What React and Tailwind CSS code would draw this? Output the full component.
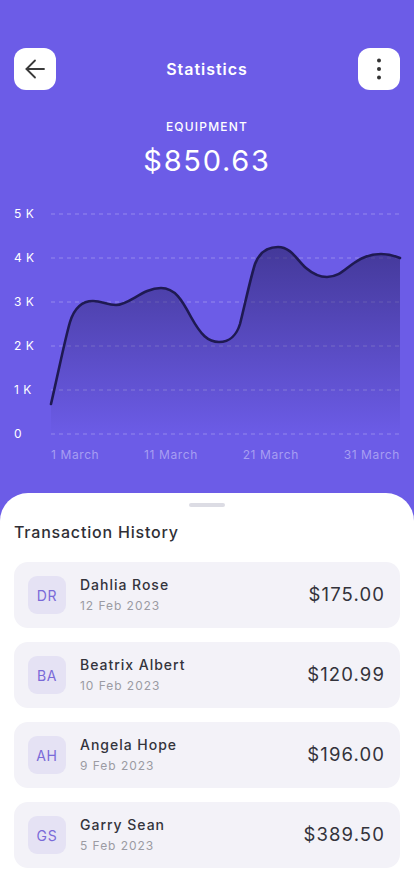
import React from "react";

const txs = [
  { i: "DR", name: "Dahlia Rose", date: "12 Feb 2023", amt: "$175.00" },
  { i: "BA", name: "Beatrix Albert", date: "10 Feb 2023", amt: "$120.99" },
  { i: "AH", name: "Angela Hope", date: "9 Feb 2023", amt: "$196.00" },
  { i: "GS", name: "Garry Sean", date: "5 Feb 2023", amt: "$389.50" },
];

const curve =
  "M0,200 C7,170 14,135 19,118 C24,102 32,97 42,97 C51,97 56,101 65,101 C78,101 92,84 110,84 C124,84 131,96 140,113 C150,131 157,138 168,138 C179,138 186,130 189,120 C194,100 200,72 204,60 C209,47 217,43 227,43 C240,43 246,56 255,64 C262,70 268,73 276,73 C288,73 294,65 303,59 C313,52 321,50 330,50 C339,50 344,52 349,54";

export default function App() {
  const ys = ["5 K", "4 K", "3 K", "2 K", "1 K", "0"];
  return (
    <div
      className="min-h-[896px] w-[414px] flex flex-col bg-[#6c5ce7]"
      style={{ fontFamily: "Inter, 'Noto Sans', sans-serif" }}
    >
      <div className="pt-[48px] px-[14px] flex items-center justify-between">
        <button className="w-[42px] h-[42px] rounded-[12px] bg-white flex items-center justify-center">
          <svg width="42" height="42" viewBox="0 0 42 42" fill="none" stroke="#3a3a3a" strokeWidth="1.8" strokeLinecap="round" strokeLinejoin="round">
            <path d="M12.5 21 H30" />
            <path d="M21 12.5 L12.5 21 L21 29.5" />
          </svg>
        </button>
        <div className="text-white text-[16px] font-semibold tracking-[0.06em]">Statistics</div>
        <button className="w-[42px] h-[42px] rounded-[12px] bg-white flex items-center justify-center">
          <svg width="42" height="42" viewBox="0 0 42 42" fill="#333">
            <circle cx="21" cy="12.5" r="2" />
            <circle cx="21" cy="21" r="2" />
            <circle cx="21" cy="29.5" r="2" />
          </svg>
        </button>
      </div>

      <div className="mt-[29px] text-center text-white text-[12px] leading-[16px] font-medium tracking-[0.1em]">EQUIPMENT</div>
      <div className="mt-[9px] text-center text-white text-[29px] leading-[34px] tracking-[0.06em]">$850.63</div>

      <div className="mt-[26px] px-[14px] flex">
        <div className="w-[37px] h-[240px] flex flex-col justify-between">
          {ys.map((y) => (
            <div key={y} className="h-[20px] leading-[20px] text-[12px] text-white tracking-[0.04em]">{y}</div>
          ))}
        </div>
        <svg width="349" height="240" viewBox="0 0 349 240" className="overflow-visible">
          <defs>
            <linearGradient id="fillg" x1="0" y1="40" x2="0" y2="232" gradientUnits="userSpaceOnUse">
              <stop offset="0" stopColor="#2a2268" stopOpacity="0.62" />
              <stop offset="1" stopColor="#2a2268" stopOpacity="0" />
            </linearGradient>
          </defs>
          {[10, 54, 98, 142, 186, 230].map((y) => (
            <line key={y} x1="0" x2="349" y1={y} y2={y} stroke="rgba(255,255,255,0.28)" strokeWidth="1" strokeDasharray="4 4" />
          ))}
          <path d={curve + " L349,232 L0,232 Z"} fill="url(#fillg)" />
          <path d={curve} fill="none" stroke="#1f1a52" strokeWidth="2.6" strokeLinecap="round" strokeLinejoin="round" />
        </svg>
      </div>
      <div className="mt-[3px] ml-[51px] w-[349px] flex justify-between text-[12px] leading-[16px] text-[#a79ef2] tracking-[0.05em]">
        <span>1 March</span>
        <span>11 March</span>
        <span>21 March</span>
        <span>31 March</span>
      </div>

      <div className="mt-[30px] flex-1 bg-white rounded-t-[28px] px-[14px] pt-[10px] pb-[29px]">
        <div className="mx-auto w-[36px] h-[4px] rounded-full bg-[#dcdce4]" />
        <div className="mt-[13px] text-[16px] leading-[24px] font-medium text-[#2f2f36] tracking-[0.05em]">Transaction History</div>
        <div className="mt-[18px] flex flex-col gap-[14px]">
          {txs.map((t) => (
            <div key={t.i} className="h-[66px] rounded-[14px] bg-[#f3f2f8] flex items-center px-[14px]">
              <div className="w-[38px] h-[38px] rounded-[9px] bg-[#e5e2f4] flex items-center justify-center text-[14px] text-[#7a6ad8] tracking-[0.05em]">
                {t.i}
              </div>
              <div className="ml-[14px] flex flex-col">
                <div className="text-[14px] leading-[18px] font-medium text-[#34343c] tracking-[0.07em]">{t.name}</div>
                <div className="mt-[4px] text-[12px] leading-[16px] text-[#9b9ba3] tracking-[0.08em]">{t.date}</div>
              </div>
              <div className="ml-auto pr-[1px] text-[18.5px] text-[#33333b] tracking-[0.06em]">{t.amt}</div>
            </div>
          ))}
        </div>
      </div>
    </div>
  );
}
